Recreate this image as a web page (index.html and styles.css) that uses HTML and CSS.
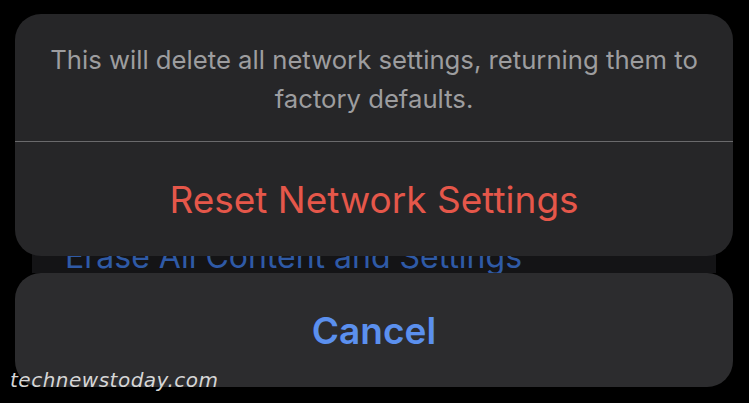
FILE: index.html
```html
<!DOCTYPE html>
<html lang="en">
<head>
  <meta charset="UTF-8" />
  <meta name="viewport" content="width=device-width, initial-scale=1.0" />
  <title>Reset Network Settings</title>
  <link rel="stylesheet" href="styles.css">
</head>
<body>
  <!-- settings list underneath the sheet -->
  <div class="backdrop">
    <div class="list-row">
      <span class="row-label">Erase All Content and Settings</span>
    </div>
  </div>

  <div class="action-sheet">
    <div class="sheet-group">
      <p class="sheet-message">This will delete all network settings, returning them to factory defaults.</p>
      <button class="sheet-action destructive">Reset Network Settings</button>
    </div>
    <button class="sheet-cancel">Cancel</button>
  </div>

  <div class="watermark">technewstoday.com</div>
</body>
</html>
```

FILE: styles.css
```css
:root {
  --bg-color: #000000;
  --sheet-color: #262628;
  --cancel-color: #2c2c2e;
  --muted-text: #9d9d9f;
  --red: #e5574a;
  --blue: #5b90ee;
}

body {
  margin: 0;
  width: 749px;
  height: 403px;
  overflow: hidden;
  background-color: var(--bg-color);
  font-family: Inter, 'Liberation Sans', sans-serif;
  position: relative;
}

.backdrop {
  padding: 150px 33px 0 32px;
}

.list-row {
  height: 123px;
  background: #141416;
  padding-left: 33px;
  display: flex;
  align-items: flex-end;
  box-sizing: border-box;
}

.row-label {
  color: #2f5aa6;
  font-size: 32px;
  line-height: 1;
}

.action-sheet {
  position: absolute;
  top: 14px;
  left: 15px;
  width: 718px;
  display: flex;
  flex-direction: column;
  gap: 17px;
}

.sheet-group {
  background: var(--sheet-color);
  border-radius: 26px;
  height: 242px;
  display: flex;
  flex-direction: column;
  overflow: hidden;
}

.sheet-message {
  margin: 0;
  height: 128px;
  box-sizing: border-box;
  padding: 26px 28px 0;
  text-align: center;
  font-size: 25.7px;
  line-height: 39px;
  color: var(--muted-text);
  border-bottom: 1px solid #6a6a6c;
}

button {
  font-family: inherit;
  border: none;
  background: none;
  cursor: pointer;
}

.sheet-action {
  flex: 1;
  font-size: 37px;
  color: var(--red);
  padding: 0;
}

.sheet-cancel {
  height: 114px;
  background: var(--cancel-color);
  border-radius: 26px;
  font-size: 37px;
  font-weight: 600;
  color: var(--blue);
}

.watermark {
  position: absolute;
  left: 10px;
  top: 368px;
  font-family: 'DejaVu Sans', sans-serif;
  font-style: italic;
  font-weight: 300;
  font-size: 20px;
  letter-spacing: 0.5px;
  color: #d6d6d6;
}
```
